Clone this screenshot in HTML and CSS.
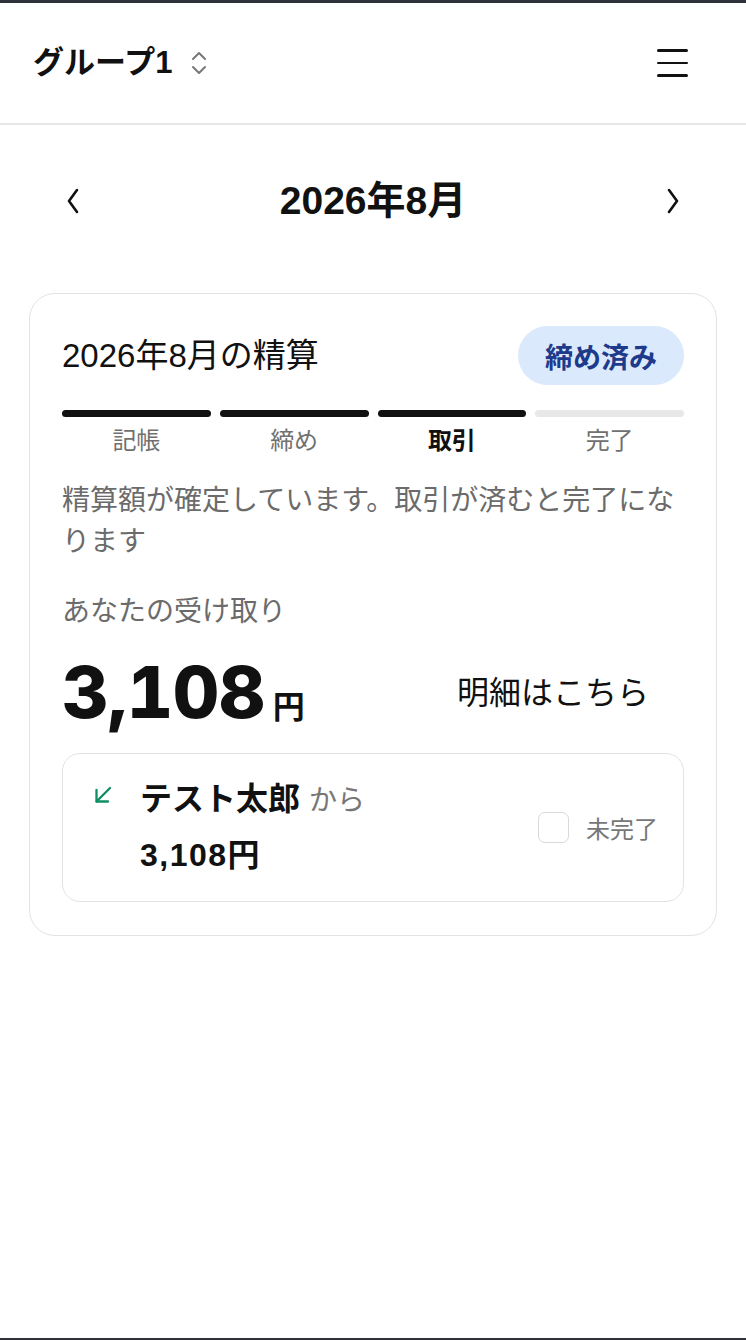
FILE: index.html
```html
<!DOCTYPE html>
<html lang="ja">
<head>
    <meta charset="UTF-8">
    <meta name="viewport" content="width=device-width, initial-scale=1.0">
    <title>精算</title>
    <link rel="stylesheet" href="styles.css">
</head>
<body>
<div class="page">

    <header class="top-bar">
        <button class="group-switch" type="button">
            <span class="group-name">グループ1</span>
            <svg class="updown" width="18" height="26" viewBox="0 0 18 26" fill="none" stroke="#777" stroke-width="2" stroke-linecap="round" stroke-linejoin="round">
                <path d="M3 9 L9 3 L15 9"/>
                <path d="M3 17 L9 23 L15 17"/>
            </svg>
        </button>
        <button class="menu-btn" type="button" aria-label="メニュー">
            <span></span><span></span><span></span>
        </button>
    </header>

    <nav class="month-nav">
        <button class="nav-arrow" type="button" aria-label="前の月">
            <svg width="14" height="26" viewBox="0 0 14 26" fill="none" stroke="#111" stroke-width="2.6" stroke-linecap="round" stroke-linejoin="round">
                <path d="M11 2 L3 13 L11 24"/>
            </svg>
        </button>
        <h1 class="month-title">2026年8月</h1>
        <button class="nav-arrow" type="button" aria-label="次の月">
            <svg width="14" height="26" viewBox="0 0 14 26" fill="none" stroke="#111" stroke-width="2.6" stroke-linecap="round" stroke-linejoin="round">
                <path d="M3 2 L11 13 L3 24"/>
            </svg>
        </button>
    </nav>

    <section class="settle-card">
        <div class="settle-head">
            <h2 class="settle-title">2026年8月の精算</h2>
            <span class="badge">締め済み</span>
        </div>

        <div class="steps">
            <div class="step done"><div class="step-bar"></div><div class="step-label">記帳</div></div>
            <div class="step done"><div class="step-bar"></div><div class="step-label">締め</div></div>
            <div class="step done current"><div class="step-bar"></div><div class="step-label">取引</div></div>
            <div class="step"><div class="step-bar"></div><div class="step-label">完了</div></div>
        </div>

        <p class="note">精算額が確定しています。取引が済むと完了になります</p>

        <p class="receive-label">あなたの受け取り</p>
        <div class="amount-row">
            <div class="amount"><span class="amount-value">3,108</span><span class="amount-unit">円</span></div>
            <a class="detail-link" href="#">明細はこちら</a>
        </div>

        <div class="transfer">
            <svg class="in-arrow" width="18" height="18" viewBox="0 0 18 18" fill="none" stroke="#0f8f63" stroke-width="2.3" stroke-linecap="round" stroke-linejoin="round">
                <path d="M16 2 L2.5 15.5"/>
                <path d="M2.5 4 V15.5 H14"/>
            </svg>
            <div class="transfer-body">
                <div class="transfer-who"><span class="who-name">テスト太郎</span><span class="who-from">から</span></div>
                <div class="transfer-amount">3,108円</div>
            </div>
            <label class="transfer-check">
                <span class="check-box"></span>
                <span class="check-text">未完了</span>
            </label>
        </div>
    </section>

</div>
</body>
</html>
```

FILE: styles.css
```css
* {
    box-sizing: border-box;
}

body {
    margin: 0;
    font-family: "Liberation Sans", "Noto Sans CJK JP", sans-serif;
    color: #111;
    background-color: #fff;
}

.page {
    min-height: 100vh;
    border-top: 3px solid #2f3238;
    border-bottom: 2px solid #2f3238;
}

button {
    font: inherit;
    background: none;
    border: none;
    padding: 0;
    color: inherit;
    cursor: pointer;
}

/* header */
.top-bar {
    height: 122px;
    padding: 0 58px 0 33px;
    display: flex;
    align-items: center;
    justify-content: space-between;
    border-bottom: 2px solid #e6e6e6;
}

.group-switch {
    display: flex;
    align-items: center;
    gap: 18px;
}

.group-name {
    font-size: 31px;
    font-weight: bold;
    line-height: 40px;
}

.menu-btn {
    width: 31px;
    display: flex;
    flex-direction: column;
    gap: 9.5px;
}

.menu-btn span {
    display: block;
    height: 2.8px;
    background-color: #111;
    border-radius: 2px;
}

/* month navigation */
.month-nav {
    margin-top: 40px;
    height: 72px;
    padding: 0 66px;
    display: flex;
    align-items: center;
    justify-content: space-between;
}

.nav-arrow {
    display: flex;
}

.month-title {
    margin: 0;
    font-size: 39px;
    font-weight: bold;
    line-height: 48px;
}

/* settlement card */
.settle-card {
    margin: 56px 29px 0;
    border: 1.5px solid #e3e3e3;
    border-radius: 26px;
    padding: 32px 32px 33px;
}

.settle-head {
    display: flex;
    align-items: center;
    justify-content: space-between;
    height: 59px;
}

.settle-title {
    margin: 0;
    font-size: 33px;
    font-weight: normal;
    line-height: 40px;
}

.badge {
    height: 59px;
    padding: 0 27px;
    display: flex;
    align-items: center;
    background-color: #dbe9fc;
    color: #1e3a8a;
    border-radius: 30px;
    font-size: 28px;
    font-weight: bold;
}

.steps {
    margin-top: 25px;
    display: grid;
    grid-template-columns: repeat(4, 1fr);
    gap: 9px;
}

.step-bar {
    height: 7px;
    border-radius: 4px;
    background-color: #e8e8e8;
}

.step.done .step-bar {
    background-color: #111;
}

.step-label {
    margin-top: 9px;
    text-align: center;
    font-size: 24px;
    line-height: 30px;
    color: #707070;
}

.step.current .step-label {
    color: #111;
    font-weight: bold;
}

.note {
    margin: 24px 0 0;
    font-size: 28px;
    line-height: 41px;
    color: #6b6b6b;
}

.receive-label {
    margin: 33px 0 0;
    font-size: 28px;
    line-height: 34px;
    color: #6b6b6b;
}

.amount-row {
    margin-top: 20px;
    display: flex;
    align-items: center;
    justify-content: space-between;
}

.amount {
    display: flex;
    align-items: baseline;
    gap: 8px;
}

.amount-value {
    font-family: Inter, "Liberation Sans", sans-serif;
    font-size: 72px;
    font-weight: 800;
    line-height: 86px;
    letter-spacing: -0.5px;
    font-variant-numeric: tabular-nums;
}

.amount-unit {
    font-size: 32px;
    font-weight: bold;
}

.detail-link {
    margin-right: 35px;
    margin-top: 2px;
    font-size: 32px;
    line-height: 40px;
    color: #111;
    text-decoration: none;
}

/* transfer row */
.transfer {
    margin-top: 18px;
    border: 1.5px solid #e3e3e3;
    border-radius: 18px;
    padding: 26px 25px 27px 31px;
    display: flex;
    align-items: flex-start;
}

.in-arrow {
    margin-top: 6px;
    flex-shrink: 0;
}

.transfer-body {
    margin-left: 28px;
    flex: 1;
}

.transfer-who {
    display: flex;
    align-items: baseline;
    gap: 9px;
    line-height: 38px;
}

.who-name {
    font-size: 32px;
    font-weight: bold;
}

.who-from {
    font-size: 28px;
    color: #777;
}

.transfer-amount {
    margin-top: 16px;
    font-size: 32px;
    font-weight: bold;
    line-height: 38px;
    letter-spacing: 1.5px;
}

.transfer-check {
    align-self: center;
    display: flex;
    align-items: center;
    gap: 17px;
}

.check-box {
    width: 31px;
    height: 31px;
    border: 1.5px solid #d9d9d9;
    border-radius: 7px;
}

.check-text {
    font-size: 24px;
    color: #777;
}
```
